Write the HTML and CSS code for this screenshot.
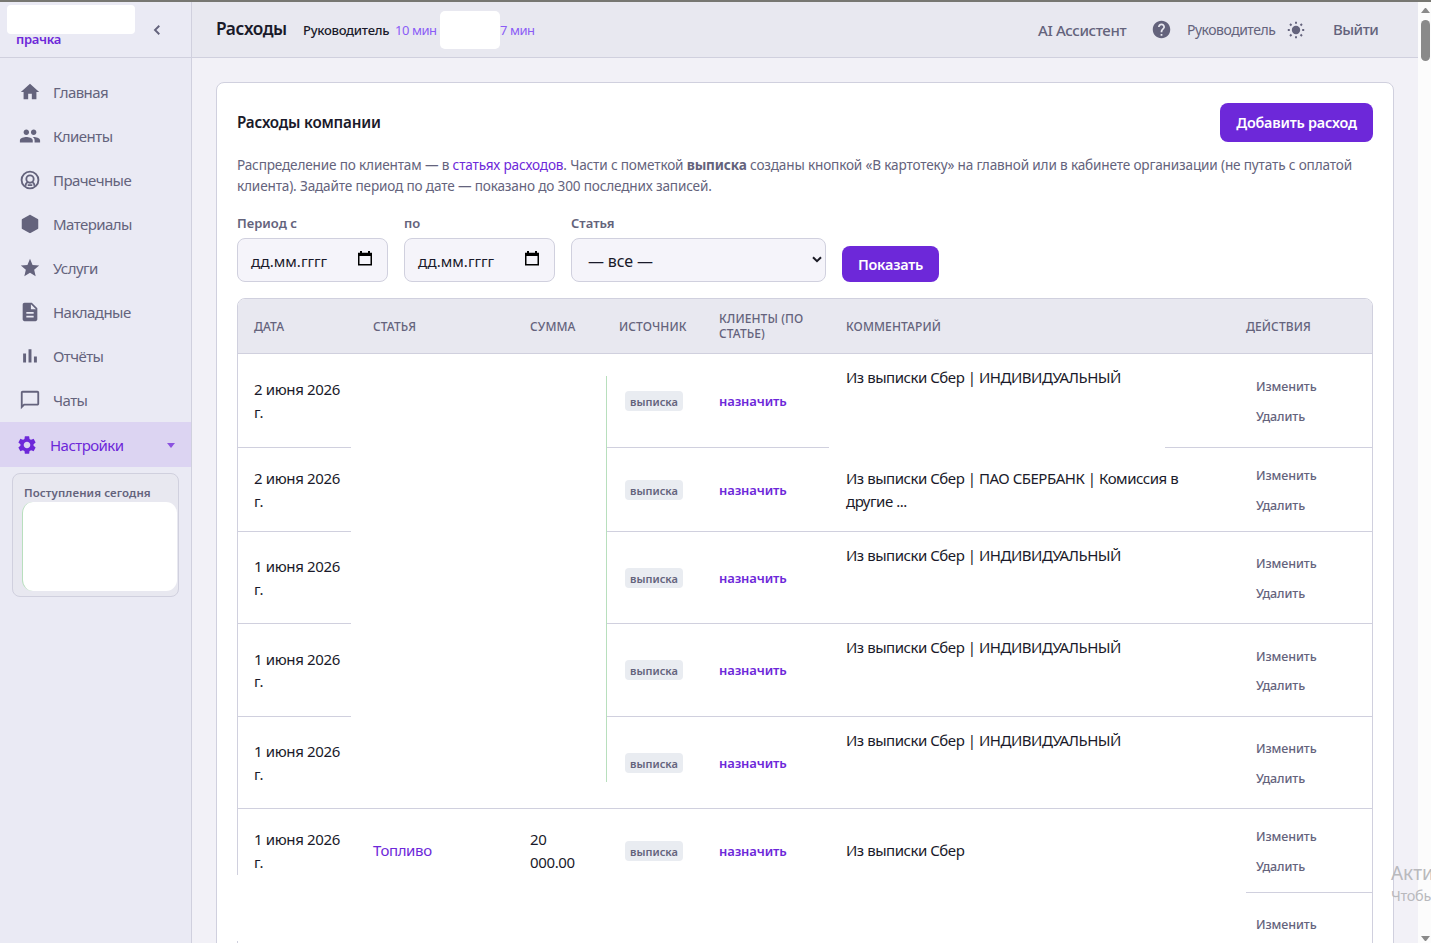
FILE: index.html
```html
<!DOCTYPE html>
<html lang="ru">
<head>
<meta charset="utf-8">
<title>Расходы</title>
<link rel="stylesheet" href="styles.css">
</head>
<body>
<div class="app">
  <aside class="sidebar">
    <div class="brand"><span class="brand-name">прачка</span><i class="blank blank-brand"></i>
      <svg class="collapse" width="10" height="12" viewBox="0 0 10 12"><path d="M7.300 1.800 3 6l4.300 4.200" fill="none" stroke="currentColor" stroke-width="1.900"/></svg></div>
    <nav class="nav">
      <a class="nav-item"><svg class="ico" viewBox="0 0 24 24"><path d="M10 20v-6h4v6h5v-8h3L12 3 2 12h3v8z"/></svg><span>Главная</span></a>
      <a class="nav-item"><svg class="ico" viewBox="0 0 24 24"><path d="M16 11c1.660 0 2.990-1.340 2.990-3S17.660 5 16 5s-3 1.340-3 3 1.340 3 3 3zm-8 0c1.660 0 2.990-1.340 2.990-3S9.660 5 8 5 5 6.340 5 8s1.340 3 3 3zm0 2c-2.330 0-7 1.170-7 3.500V19h14v-2.500C15 14.170 10.330 13 8 13zm8 0c-.29 0-.62.02-.97.05 1.160.84 1.970 1.970 1.970 3.450V19h6v-2.500c0-2.330-4.670-3.500-7-3.500z"/></svg><span>Клиенты</span></a>
      <a class="nav-item"><svg class="ico" viewBox="0 0 24 24"><g fill="none" stroke="currentColor" stroke-width="2"><circle cx="12" cy="12" r="9.200"/><circle cx="12" cy="11" r="4"/><path d="M7 18.500c.2-2 1-3.500 2.500-4.300M17 18.500c-.2-2-1-3.500-2.500-4.300M9.500 17.500h5"/></g></svg><span>Прачечные</span></a>
      <a class="nav-item"><svg class="ico" viewBox="0 0 24 24"><path d="M21 16.500c0 .38-.21.71-.53.88l-7.900 4.440c-.16.12-.36.18-.57.18s-.41-.06-.57-.18l-7.900-4.440A.99.99 0 0 1 3 16.500v-9c0-.38.21-.71.53-.88l7.900-4.440c.16-.12.36-.18.57-.18s.41.06.57.18l7.900 4.440c.32.17.53.5.53.88z"/></svg><span>Материалы</span></a>
      <a class="nav-item"><svg class="ico" viewBox="0 0 24 24"><path d="M12 17.270 18.180 21l-1.640-7.030L22 9.240l-7.190-.61L12 2 9.190 8.630 2 9.240l5.460 4.730L5.820 21z"/></svg><span>Услуги</span></a>
      <a class="nav-item"><svg class="ico" viewBox="0 0 24 24"><path d="M14 2H6c-1.100 0-1.990.9-1.990 2L4 20c0 1.100.89 2 1.990 2H18c1.100 0 2-.9 2-2V8zm2 16H8v-2h8zm0-4H8v-2h8zm-3-5V3.500L18.500 9z"/></svg><span>Накладные</span></a>
      <a class="nav-item"><svg class="ico" viewBox="0 0 24 24"><path d="M4.500 9.200h3.200V19H4.500zM10.400 4.500h3.200V19h-3.200zm5.900 8h3.200V19h-3.200z"/></svg><span>Отчёты</span></a>
      <a class="nav-item"><svg class="ico" viewBox="0 0 24 24"><path d="M20 2H4c-1.100 0-2 .9-2 2v18l4-4h14c1.100 0 2-.9 2-2V4c0-1.100-.9-2-2-2zm0 14H5.170L4 17.170V4h16z"/></svg><span>Чаты</span></a>
      <a class="nav-item active"><svg class="ico" viewBox="0 0 24 24"><path d="M19.140 12.940c.04-.3.060-.61.060-.94 0-.32-.02-.64-.07-.94l2.030-1.580a.49.49 0 0 0 .12-.61l-1.920-3.320a.488.488 0 0 0-.59-.22l-2.390.96c-.5-.38-1.030-.7-1.620-.94l-.36-2.540a.484.484 0 0 0-.48-.41h-3.840c-.24 0-.43.17-.47.41l-.36 2.540c-.59.24-1.130.57-1.620.94l-2.390-.96c-.22-.08-.47 0-.59.22L2.740 8.870c-.12.21-.08.47.12.61l2.030 1.580c-.05.3-.09.63-.09.94s.02.64.07.94l-2.030 1.580a.49.49 0 0 0-.12.61l1.920 3.320c.12.22.37.29.59.22l2.390-.96c.5.38 1.030.7 1.620.94l.36 2.540c.05.24.24.41.48.41h3.840c.24 0 .44-.17.47-.41l.36-2.540c.59-.24 1.130-.56 1.620-.94l2.390.96c.22.08.47 0 .59-.22l1.920-3.320c.12-.22.07-.47-.12-.61zM12 15.600c-1.980 0-3.600-1.620-3.600-3.600s1.620-3.600 3.600-3.600 3.600 1.620 3.600 3.600-1.620 3.600-3.600 3.600z"/></svg><span>Настройки</span><i class="caret"></i></a>
    </nav>
    <section class="today"><h3>Поступления сегодня</h3><div class="today-body"></div></section>
  </aside>
  <div class="page">
    <header class="topbar">
      <h1>Расходы</h1><span class="role">Руководитель</span><span class="time t1">10 мин</span><i class="blank-time"></i><span class="time t2">7 мин</span>
      <div class="tools">
        <a class="ai">AI Ассистент</a>
        <svg class="help" viewBox="0 0 24 24"><path d="M12 2C6.480 2 2 6.480 2 12s4.480 10 10 10 10-4.480 10-10S17.520 2 12 2zm1 17h-2v-2h2zm2.070-7.750-.9.92C13.450 12.900 13 13.500 13 15h-2v-.5c0-1.100.45-2.100 1.170-2.830l1.240-1.260c.37-.36.59-.86.59-1.410 0-1.100-.9-2-2-2s-2 .9-2 2H8c0-2.210 1.790-4 4-4s4 1.790 4 4c0 .88-.36 1.680-.93 2.250z"/></svg>
        <span class="user">Руководитель</span>
        <svg class="sun" viewBox="0 0 18 18"><circle cx="9" cy="9" r="4.200"/><path d="M9 .8v2M9 15.200v2M.8 9h2M15.200 9h2M3 3l1.500 1.500M13.500 13.500 15 15M3 15l1.500-1.500M13.500 4.500 15 3" stroke="currentColor" stroke-width="1.900"/></svg>
        <a class="logout">Выйти</a>
      </div>
    </header>
    <main class="content">
      <section class="card">
        <div class="card-head"><h2>Расходы компании</h2><button class="btn add">Добавить расход</button></div>
        <div class="hint"><div>Распределение по клиентам — в <a>статьях расходов</a>. Части с пометкой <b>выписка</b> созданы кнопкой «В картотеку» на главной или в кабинете организации (не путать с оплатой</div><div>клиента). Задайте период по дате — показано до 300 последних записей.</div></div>
        <form class="filters">
          <label class="field date"><span>Период с</span><div class="input"><em>дд.мм.гггг</em><svg class="cal" viewBox="0 0 14 15"><path d="M.75 2.500h12.500v11.250H.75z" fill="none" stroke="#000" stroke-width="1.500"/><path d="M0 2h14v3H0zM2 0h2v3H2zM10 0h2v3h-2z"/></svg></div></label>
          <label class="field date"><span>по</span><div class="input"><em>дд.мм.гггг</em><svg class="cal" viewBox="0 0 14 15"><path d="M.75 2.500h12.500v11.250H.75z" fill="none" stroke="#000" stroke-width="1.500"/><path d="M0 2h14v3H0zM2 0h2v3H2zM10 0h2v3h-2z"/></svg></div></label>
          <label class="field sel"><span>Статья</span><div class="input"><em>— все —</em><svg class="chev" viewBox="0 0 10 7"><path d="m1 1.200 4 4 4-4" fill="none" stroke="#1a1a24" stroke-width="2"/></svg></div></label>
          <button type="button" class="btn show">Показать</button>
        </form>
        <div class="table">
          <div class="row head"><div>ДАТА</div><div>СТАТЬЯ</div><div>СУММА</div><div>ИСТОЧНИК</div><div>КЛИЕНТЫ (ПО<br>СТАТЬЕ)</div><div>КОММЕНТАРИЙ</div><div>ДЕЙСТВИЯ</div></div>
          <div class="row r94"><div class="d">2 июня 2026<br>г.</div><div></div><div></div><div><span class="badge">выписка</span></div><div><a class="assign">назначить</a></div><div class="top"><span class="c">Из выписки Сбер | ИНДИВИДУАЛЬНЫЙ</span></div><div class="acts"><a>Изменить</a><a>Удалить</a></div></div>
          <div class="row r84"><div class="d">2 июня 2026<br>г.</div><div></div><div></div><div><span class="badge">выписка</span></div><div><a class="assign">назначить</a></div><div><span class="c">Из выписки Сбер | ПАО СБЕРБАНК | Комиссия в<br>другие ...</span></div><div class="acts"><a>Изменить</a><a>Удалить</a></div></div>
          <div class="row r92"><div class="d">1 июня 2026<br>г.</div><div></div><div></div><div><span class="badge">выписка</span></div><div><a class="assign">назначить</a></div><div class="top"><span class="c">Из выписки Сбер | ИНДИВИДУАЛЬНЫЙ</span></div><div class="acts"><a>Изменить</a><a>Удалить</a></div></div>
          <div class="row r93"><div class="d">1 июня 2026<br>г.</div><div></div><div></div><div><span class="badge">выписка</span></div><div><a class="assign">назначить</a></div><div class="top"><span class="c">Из выписки Сбер | ИНДИВИДУАЛЬНЫЙ</span></div><div class="acts"><a>Изменить</a><a>Удалить</a></div></div>
          <div class="row r92"><div class="d">1 июня 2026<br>г.</div><div></div><div></div><div><span class="badge">выписка</span></div><div><a class="assign">назначить</a></div><div class="top"><span class="c">Из выписки Сбер | ИНДИВИДУАЛЬНЫЙ</span></div><div class="acts"><a>Изменить</a><a>Удалить</a></div></div>
          <div class="row r84"><div class="d">1 июня 2026<br>г.</div><div><a class="fuel">Топливо</a></div><div class="sum">20<br>000.00</div><div><span class="badge">выписка</span></div><div><a class="assign">назначить</a></div><div><span class="c">Из выписки Сбер</span></div><div class="acts"><a>Изменить</a><a>Удалить</a></div></div>
          <div class="row r92"><div></div><div></div><div></div><div></div><div></div><div></div><div class="acts"><a>Изменить</a></div></div>
          <i class="blank m1"></i><i class="blank m2"></i><i class="blank m3"></i>
        </div>
      </section>
    </main>
  </div>
  <div class="scrollbar"><i class="up"></i><i class="thumb"></i><i class="down"></i></div>
  <div class="activation"><div class="a1">Акти</div><div class="a2">Чтобы</div></div>
</div>
</body>
</html>
```
FILE: styles.css
```css
* { box-sizing: border-box; }
html, body { margin: 0; height: 100%; overflow: hidden; }
body { font-family: "Noto Sans", "Open Sans", sans-serif; font-size: 15px; color: #1a1a2a; background: #f2f1f7; }
h1, h2, h3 { margin: 0; font-weight: 600; }
a { color: inherit; text-decoration: none; }
em { font-style: normal; }
.app { position: relative; display: flex; height: 943px; border-top: 2px solid #777772; overflow: hidden; white-space: nowrap; }
.sidebar { width: 192px; flex: none; background: #eaeaf4; border-right: 1px solid #d0d0de; color: #64637c; }
.brand { position: relative; height: 56px; border-bottom: 1px solid #d0d0de; padding: 27px 0 0 16px; line-height: 20px; font-size: 13px; font-weight: 600; letter-spacing: -.3px; color: #6d28d9; }
.blank { position: absolute; background: #fff; }
.blank-brand { left: 7px; top: 3px; width: 128px; height: 29px; border-radius: 4px; }
.collapse { position: absolute; left: 152px; top: 22px; color: #64637c; }
.nav { padding-top: 12px; }
.nav-item { display: flex; align-items: center; height: 44px; padding: 0 16px 0 19px; gap: 12px; font-size: 15px; letter-spacing: -.55px; }
.ico { width: 22px; height: 22px; fill: currentColor; flex: none; }
.nav-item.active { height: 45px; padding-left: 16px; background: #dcd4f2; color: #6d28d9; }
.caret { margin-left: auto; margin-top: 1px; border: 4px solid transparent; border-top: 5px solid #8b52e0; border-bottom: 0; }
.today { margin: 6px 12px 0; height: 124px; border: 1px solid #d0d0de; border-radius: 8px; background: #e8e8f0; padding: 9px 0 0 9px; }
.today h3 { padding-left: 2px; font-size: 11.500px; line-height: 19px; letter-spacing: .1px; }
.today-body { width: 155px; height: 89px; background: #fff; border-radius: 11px; border-left: 1px solid #b8dfbd; }
.page { width: 1226px; flex: none; }
.topbar { height: 56px; display: flex; align-items: center; background: #e8e8f0; border-bottom: 1px solid #d0d0de; padding: 0 40px 0 24px; }
.topbar h1 { font-size: 17.300px; width: 87px; letter-spacing: -.4px; line-height: 22px; margin-top: -2px; }
.role { font-size: 13px; font-weight: 500; width: 92px; letter-spacing: -.27px; }
.time { font-size: 13px; color: #8b5cf6; letter-spacing: -.45px; }
.t1 { width: 45px; }
.blank-time { width: 60px; height: 38px; background: #fff; border-radius: 5px; }
.tools { margin-left: auto; display: flex; align-items: center; color: #64637c; }
.ai { width: 113px; font-weight: 500; font-size: 15px; letter-spacing: -.37px; }
.help { width: 21px; height: 21px; fill: currentColor; margin-right: 15px; }
.user { font-size: 14px; width: 100px; letter-spacing: -.5px; }
.sun { width: 18px; height: 18px; fill: currentColor; margin-right: 28px; }
.logout { font-size: 15px; font-weight: 500; width: 45px; letter-spacing: -.5px; margin-top: -1px; }
.content { padding: 24px 24px 0; }
.card { width: 1178px; height: 900px; background: #fff; border: 1px solid #d0d0de; border-radius: 8px; padding: 20px; }
.card-head { display: flex; align-items: center; justify-content: space-between; height: 39px; }
.card-head h2 { font-size: 15.200px; letter-spacing: -.2px; margin-top: -2px; }
.btn { border: 0; border-radius: 8px; background: #6d28d9; color: #fff; font: 600 14.400px "Noto Sans", sans-serif; letter-spacing: -.22px; padding: 0; white-space: nowrap; }
.add { width: 153px; height: 39px; }
.hint { margin-top: 12px; font-size: 13.600px; line-height: 21px; letter-spacing: -.165px; color: #64637c; }
.hint a { color: #6d28d9; }
.filters { display: flex; align-items: flex-end; gap: 16px; height: 69px; margin-top: 17px; }
.field { font-size: 13px; font-weight: 600; color: #64637c; }
.field > span { display: block; line-height: 20px; margin-bottom: 5px; }
.date { width: 151px; }
.sel { width: 255px; }
.input { height: 44px; border: 1px solid #d0d0de; border-radius: 8px; background: #f5f4fa; color: #1a1a2a; display: flex; align-items: center; font-weight: 400; font-size: 15px; padding: 2px 15px 0 13px; justify-content: space-between; }
.sel .input { padding: 2px 3px 0 16px; }
.sel em { letter-spacing: -.15px; font-size: 16px; }
.cal { width: 14px; height: 15px; margin-top: -5px; }
.chev { width: 10px; height: 7px; margin-top: -3px; }
.show { width: 97px; height: 36px; }
.table { position: relative; margin-top: 16px; width: 1136px; height: 700px; border: 1px solid #d0d0de; border-radius: 8px 8px 0 0; }
.row { display: grid; grid-template-columns: 119px 157px 89px 100px 127px 400px 142px; align-items: center; border-bottom: 1px solid #d0d0de; line-height: 22.400px; }
.row > div { padding-left: 16px; }
.head { height: 55px; background: #e8e8f0; border-radius: 7px 7px 0 0; color: #64637c; font-size: 12px; font-weight: 500; line-height: 15px; letter-spacing: .1px; }
.r94 { height: 94px; }
.r93 { height: 93px; }
.r92 { height: 92px; }
.r84 { height: 84px; }
.d, .fuel, .sum { letter-spacing: -.36px; }
.c { letter-spacing: -.47px; }
.top { align-self: start; padding-top: 12px; }
.badge { display: block; width: 58px; height: 20px; margin-left: 6px; border-radius: 4px; background: #e9ecf1; color: #64637c; font-size: 11px; font-weight: 600; line-height: 21px; text-align: center; }
.assign { color: #6d28d9; font-size: 13px; font-weight: 600; letter-spacing: -.12px; }
.fuel { color: #6d28d9; }
.row > .acts { display: flex; flex-direction: column; padding: 2px 0 0 26px; font-size: 12.500px; font-weight: 500; letter-spacing: -.1px; color: #64637c; line-height: 29.500px; }
.r92 > .acts:only-child, .r92 > .acts { min-height: 61px; }
.m1 { left: 113px; top: 70px; width: 256px; height: 430px; border-radius: 6px; }
.m1::after { content: ""; position: absolute; right: 0; top: 7px; width: 1px; height: 406px; background: #b8dfbd; }
.m2 { left: 591px; top: 92px; width: 336px; height: 70px; }
.m3 { left: -1px; top: 576px; width: 1009px; height: 66px; }
.scrollbar { position: relative; width: 13px; background: #fcfcfc; }
.scrollbar i { position: absolute; left: 3px; width: 9px; }
.up { top: 6px; border: 4.500px solid transparent; border-bottom: 5px solid #8a8a8a; border-top: 0; }
.thumb { top: 18px; height: 41px; background: #8a8a8a; border-radius: 5px; }
.down { bottom: 2px; border: 4.500px solid transparent; border-top: 5px solid #8a8a8a; border-bottom: 0; }
.activation { position: absolute; left: 1391px; top: 859px; color: #b9b9bd; }
.a1 { font-size: 19px; line-height: 24px; }
.a2 { font-size: 14.500px; line-height: 20px; letter-spacing: -.3px; }
```
